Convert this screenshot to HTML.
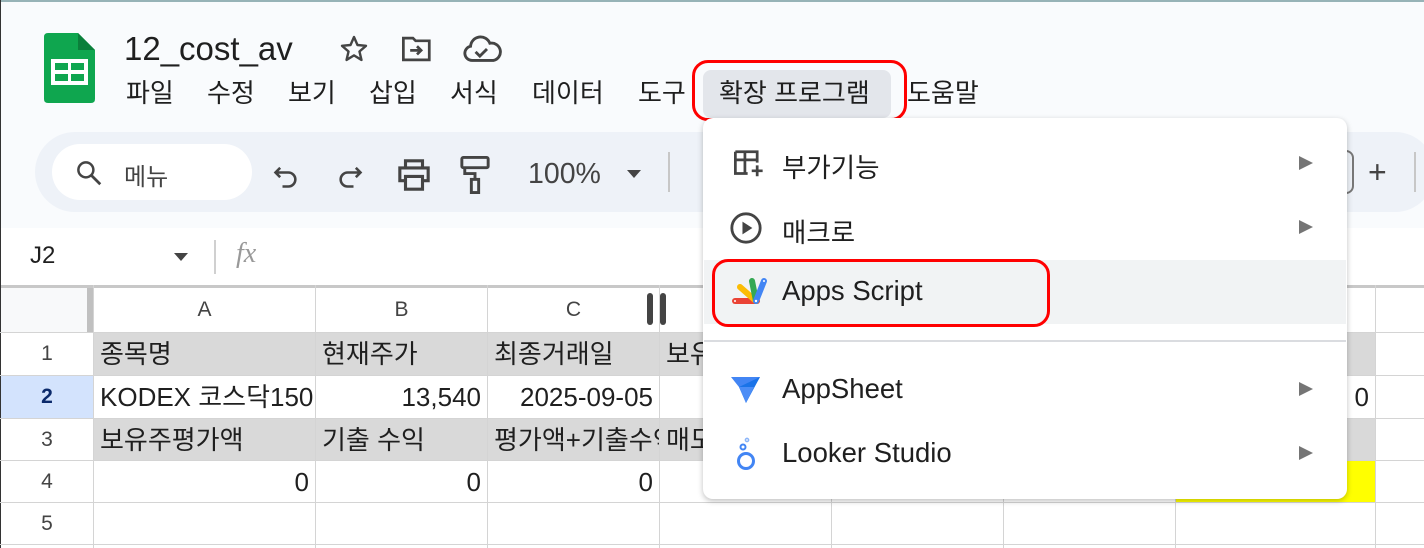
<!DOCTYPE html>
<html><head><meta charset="utf-8">
<style>
*{margin:0;padding:0;box-sizing:border-box}
body{width:1424px;height:548px;overflow:hidden;background:#f9fbfd;position:relative;font-family:"Liberation Sans","Noto Sans CJK KR",sans-serif;color:#1f1f1f}
.abs{position:absolute}
.menu span{position:absolute;top:78px;font-size:26px;line-height:30px}
.cell{position:absolute;font-size:26px;line-height:42px;white-space:nowrap;overflow:hidden;padding:0 6px}
.vl{position:absolute;top:285px;bottom:0;width:1px;background:#d4d4d4}
.hl{position:absolute;left:0;right:0;height:1px;background:#d4d4d4}
.mi{position:absolute;left:782px;font-size:26.5px}
.arr{position:absolute;left:1299px;width:0;height:0;border-left:14px solid #757575;border-top:7px solid transparent;border-bottom:7px solid transparent}
</style></head><body>
<div class="abs" style="left:0;top:0;width:1424px;height:2px;background:#97b3b7"></div>
<div class="abs" style="left:0;top:0;width:1px;height:548px;background:#333"></div>
<svg class="abs" style="left:44px;top:33px" width="52" height="70" viewBox="0 0 52 70"><path d="M4 0H34L51 17V66Q51 70 47 70H4Q0 70 0 66V4Q0 0 4 0Z" fill="#0fa64f"/><path d="M34 0V17H51Z" fill="#0b7f3b"/><rect x="7" y="26" width="37" height="26" fill="#fff"/><rect x="11" y="30" width="13" height="7" fill="#0fa64f"/><rect x="27" y="30" width="13" height="7" fill="#0fa64f"/><rect x="11" y="41" width="13" height="7" fill="#0fa64f"/><rect x="27" y="41" width="13" height="7" fill="#0fa64f"/></svg>
<div class="abs" style="left:124px;top:29px;font-size:33px;line-height:40px">12_cost_av</div>
<svg class="abs" style="left:338px;top:33px" width="32" height="32" viewBox="0 0 24 24"><path d="M12 3l2.6 6 6.4.6-4.9 4.3 1.5 6.3L12 16.8 6.4 20.2l1.5-6.3L3 9.6l6.4-.6z" fill="none" stroke="#444" stroke-width="1.8" stroke-linejoin="round"/></svg>
<svg class="abs" style="left:400px;top:34px" width="34" height="30" viewBox="0 0 24 22"><path d="M2 3h7l2 2h10v14H2z" fill="none" stroke="#444" stroke-width="2"/><path d="M7 12h8M12 9l3 3-3 3" fill="none" stroke="#444" stroke-width="2"/></svg>
<svg class="abs" style="left:462px;top:34px" width="40" height="30" viewBox="0 0 28 20"><path d="M7 18a5 5 0 0 1-1-9.9A7 7 0 0 1 19.5 6 5 5 0 0 1 22 18z" fill="none" stroke="#444" stroke-width="2"/><path d="M9.5 12l3 3 5-5" fill="none" stroke="#444" stroke-width="2"/></svg>
<div class="menu">
<span style="left:126px">파일</span><span style="left:207px">수정</span><span style="left:288px">보기</span><span style="left:369px">삽입</span><span style="left:450px">서식</span><span style="left:532px">데이터</span><span style="left:638px">도구</span>
</div>
<div class="abs" style="left:703px;top:70px;width:188px;height:48px;background:#e3e6eb;border-radius:8px"></div>
<div class="abs" style="left:719px;top:78px;font-size:26px;line-height:30px">확장 프로그램</div>
<div class="abs" style="left:907px;top:78px;font-size:26px;line-height:30px">도움말</div>
<div class="abs" style="left:692px;top:60px;width:215px;height:61px;border:3px solid #f00;border-radius:16px"></div>
<div class="abs" style="left:35px;top:132px;width:1400px;height:80px;background:#eef2f8;border-radius:40px"></div>
<div class="abs" style="left:52px;top:144px;width:200px;height:56px;background:#fff;border-radius:28px"></div>
<svg class="abs" style="left:74px;top:158px" width="30" height="30" viewBox="0 0 24 24"><circle cx="9.5" cy="9.5" r="6" fill="none" stroke="#444" stroke-width="2"/><path d="M14 14l7 7" stroke="#444" stroke-width="2.2"/></svg>
<div class="abs" style="left:124px;top:157px;font-size:24px;color:#444">메뉴</div>
<svg class="abs" style="left:272px;top:162px" width="28" height="28" viewBox="0 0 24 24"><path d="M7 5L3 9l4 4M3 9h11a6 6 0 0 1 0 12H9" fill="none" stroke="#444" stroke-width="2.2"/></svg>
<svg class="abs" style="left:336px;top:162px" width="28" height="28" viewBox="0 0 24 24"><path d="M17 5l4 4-4 4M21 9H10a6 6 0 0 0 0 12h5" fill="none" stroke="#444" stroke-width="2.2"/></svg>
<svg class="abs" style="left:397px;top:159px" width="34" height="32" viewBox="0 0 24 22"><path d="M6 6V1h12v5M6 15H2V6h20v9h-4M6 12h12v9H6z" fill="none" stroke="#444" stroke-width="2.2"/></svg>
<svg class="abs" style="left:460px;top:156px" width="30" height="38" viewBox="0 0 20 26"><rect x="1" y="1" width="18" height="7" rx="1" fill="none" stroke="#444" stroke-width="2"/><path d="M3 8v4h7v4" fill="none" stroke="#444" stroke-width="2"/><rect x="7.5" y="16" width="5" height="9" fill="none" stroke="#444" stroke-width="2"/></svg>
<div class="abs" style="left:528px;top:158px;font-size:28.5px;color:#444">100%</div>
<div class="abs" style="left:627px;top:170px;border-top:8px solid #444;border-left:7px solid transparent;border-right:7px solid transparent"></div>
<div class="abs" style="left:668px;top:152px;width:2px;height:40px;background:#c7c7c7"></div>
<div class="abs" style="left:1346px;top:150px;width:8px;height:44px;border:2px solid #777;border-left:none;border-radius:0 8px 8px 0"></div>
<div class="abs" style="left:1368px;top:156px;font-size:32px;color:#444;line-height:32px">+</div>
<div class="abs" style="left:1414px;top:152px;width:2px;height:40px;background:#c7c7c7"></div>
<div class="abs" style="left:1px;top:228px;width:1423px;height:57px;background:#fff"></div>
<div class="abs" style="left:30px;top:242px;font-size:24px">J2</div>
<div class="abs" style="left:174px;top:253px;border-top:8px solid #444;border-left:7px solid transparent;border-right:7px solid transparent"></div>
<div class="abs" style="left:214px;top:240px;width:2px;height:34px;background:#d0d0d0"></div>
<div class="abs" style="left:236px;top:238px;font-size:28px;font-style:italic;font-family:'Liberation Serif',serif;color:#999">fx</div>
<div class="abs" style="left:1px;top:285px;width:1423px;height:263px;background:#fff"></div>
<div class="abs" style="left:1px;top:285px;width:1423px;height:3px;background:#c8c8c8"></div>
<div class="abs" style="left:1px;top:288px;width:87px;height:45px;background:#f8f9fa"></div>
<div class="abs" style="left:87px;top:288px;width:7px;height:45px;background:#c0c0c0"></div>
<div class="abs" style="left:1px;top:376px;width:92px;height:42px;background:#d3e3fd"></div>
<div class="abs" style="left:94px;top:333px;width:1282px;height:42px;background:#d9d9d9"></div>
<div class="abs" style="left:94px;top:419px;width:1282px;height:41px;background:#d9d9d9"></div>
<div class="abs" style="left:1176px;top:461px;width:200px;height:41px;background:#ffff00"></div>
<div class="hl" style="top:332px"></div><div class="hl" style="top:375px"></div><div class="hl" style="top:418px"></div><div class="hl" style="top:460px"></div><div class="hl" style="top:502px"></div><div class="hl" style="top:544px"></div>
<div class="vl" style="left:93px"></div><div class="vl" style="left:315px"></div><div class="vl" style="left:487px"></div><div class="vl" style="left:659px"></div><div class="vl" style="left:831px"></div><div class="vl" style="left:1003px"></div><div class="vl" style="left:1175px"></div><div class="vl" style="left:1375px"></div>
<div class="abs" style="left:647px;top:293px;width:6px;height:32px;background:#444;border-radius:3px"></div>
<div class="abs" style="left:660px;top:293px;width:6px;height:32px;background:#444;border-radius:3px"></div>
<div class="cell" style="left:94px;top:289px;width:221px;text-align:center;font-size:21px;color:#444">A</div>
<div class="cell" style="left:316px;top:289px;width:171px;text-align:center;font-size:21px;color:#444">B</div>
<div class="cell" style="left:488px;top:289px;width:171px;text-align:center;font-size:21px;color:#444">C</div>
<div class="cell" style="left:1px;top:333px;width:92px;text-align:center;font-size:21px;color:#444">1</div>
<div class="cell" style="left:1px;top:376px;width:92px;text-align:center;font-size:21px;color:#0b2a6b;font-weight:bold">2</div>
<div class="cell" style="left:1px;top:419px;width:92px;text-align:center;font-size:21px;color:#444">3</div>
<div class="cell" style="left:1px;top:461px;width:92px;text-align:center;font-size:21px;color:#444">4</div>
<div class="cell" style="left:1px;top:503px;width:92px;text-align:center;font-size:21px;color:#444">5</div>
<div class="cell" style="left:94px;top:333px;width:221px">종목명</div>
<div class="cell" style="left:316px;top:333px;width:171px">현재주가</div>
<div class="cell" style="left:488px;top:333px;width:171px">최종거래일</div>
<div class="cell" style="left:660px;top:333px;width:60px">보유</div>
<div class="cell" style="left:94px;top:376px;width:221px;padding-right:0">KODEX 코스닥150</div>
<div class="cell" style="left:316px;top:376px;width:171px;text-align:right">13,540</div>
<div class="cell" style="left:488px;top:376px;width:171px;text-align:right">2025-09-05</div>
<div class="cell" style="left:1176px;top:376px;width:199px;text-align:right">0</div>
<div class="cell" style="left:94px;top:419px;width:221px">보유주평가액</div>
<div class="cell" style="left:316px;top:419px;width:171px">기출 수익</div>
<div class="cell" style="left:488px;top:419px;width:171px;padding-right:0">평가액+기출수익</div>
<div class="cell" style="left:660px;top:419px;width:60px">매도</div>
<div class="cell" style="left:94px;top:461px;width:221px;text-align:right">0</div>
<div class="cell" style="left:316px;top:461px;width:171px;text-align:right">0</div>
<div class="cell" style="left:488px;top:461px;width:171px;text-align:right">0</div>
<div class="abs" style="left:703px;top:118px;width:644px;height:381px;background:#fff;border-radius:10px;box-shadow:0 2px 6px rgba(0,0,0,.25)"></div>
<svg class="abs" style="left:732px;top:149px" width="34" height="30" viewBox="0 0 24 22"><path d="M2 2h16v8M2 2v16h9M2 8h16M9 2v16" fill="none" stroke="#444" stroke-width="2"/><path d="M18 12v8M14 16h8" stroke="#444" stroke-width="2"/></svg>
<div class="mi" style="top:146px">부가기능</div><div class="arr" style="top:156px"></div>
<svg class="abs" style="left:729px;top:211px" width="34" height="34" viewBox="0 0 24 24"><circle cx="12" cy="12" r="10" fill="none" stroke="#444" stroke-width="2"/><path d="M9.5 7.5v9l7-4.5z" fill="#444"/></svg>
<div class="mi" style="top:211px">매크로</div><div class="arr" style="top:220px"></div>
<div class="abs" style="left:704px;top:260px;width:642px;height:64px;background:#f1f3f4"></div>
<svg class="abs" style="left:732px;top:277px" width="36" height="30" viewBox="0 0 36 30"><path d="M3 24h22" stroke="#ea4335" stroke-width="6" stroke-linecap="round"/><path d="M8 10l16 14" stroke="#fbbc04" stroke-width="6" stroke-linecap="round"/><path d="M20 4l4 20" stroke="#34a853" stroke-width="6" stroke-linecap="round"/><path d="M32 4l-8 20" stroke="#4285f4" stroke-width="6" stroke-linecap="round"/><circle cx="3" cy="24" r="1" fill="#fff"/><circle cx="32" cy="4" r="1" fill="#fff"/><circle cx="24" cy="24" r="1.2" fill="#fff"/></svg>
<div class="mi" style="top:275px;font-size:27.5px">Apps Script</div>
<div class="abs" style="left:712px;top:259px;width:338px;height:68px;border:3px solid #f00;border-radius:16px"></div>
<div class="abs" style="left:704px;top:340px;width:642px;height:2px;background:#dadce0"></div>
<svg class="abs" style="left:731px;top:377px" width="30" height="26" viewBox="0 0 30 26"><path d="M0 0h29l-6 10H8z" fill="#4285f4"/><path d="M29 0L15 26l-7-16z" fill="#1a73e8"/><path d="M8 10h15l-8 16z" fill="#4c8df6"/></svg>
<div class="mi" style="top:373px;font-size:27.5px">AppSheet</div><div class="arr" style="top:382px"></div>
<svg class="abs" style="left:734px;top:437px" width="26" height="34" viewBox="0 0 26 34"><circle cx="12" cy="24" r="7.5" fill="none" stroke="#4285f4" stroke-width="3"/><circle cx="9" cy="10" r="2.5" fill="none" stroke="#4285f4" stroke-width="2"/><circle cx="13" cy="3" r="1.6" fill="none" stroke="#8ab4f8" stroke-width="1.5"/></svg>
<div class="mi" style="top:437px;font-size:27.5px">Looker Studio</div><div class="arr" style="top:446px"></div>
</body></html>
